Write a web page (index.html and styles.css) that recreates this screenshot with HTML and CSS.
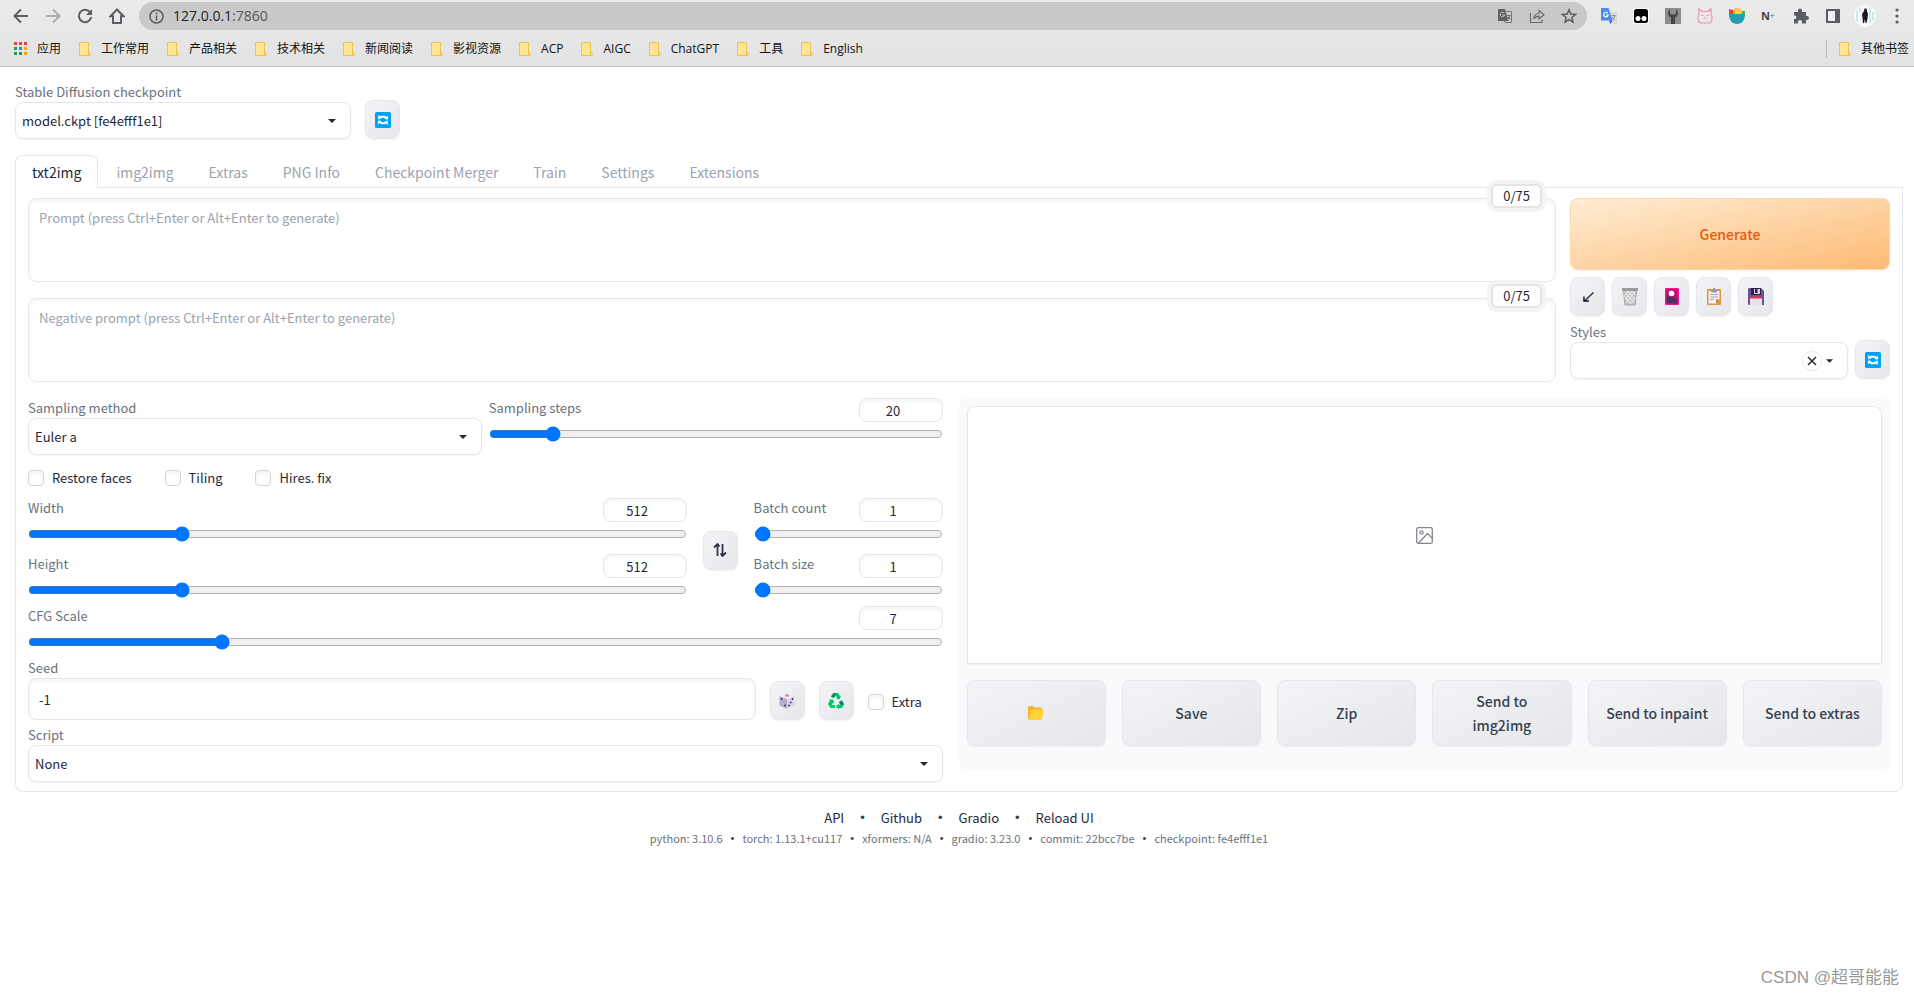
FILE: index.html
```html
<!DOCTYPE html>
<html lang="zh-CN">
<head>
<meta charset="utf-8">
<title>Stable Diffusion</title>
<link rel="stylesheet" href="styles.css">
</head>
<body>
<svg class="defs" width="0" height="0" aria-hidden="true">
  <symbol id="folder" viewBox="0 0 12 14"><path d="M.5.5h9v9.500h1.500v3.500H.5z" fill="#ffe694" stroke="#ecc548"/><path d="M9.500 9.500v3.500" stroke="#ecc548"/></symbol>
  <symbol id="caret" viewBox="0 0 8 4"><path d="M0 0h8L4 4z" fill="#1f2937"/></symbol>
  <symbol id="refresh" viewBox="0 0 16 16"><rect width="16" height="16" rx="1.500" fill="#00a2ed"/><path d="M5.500 4.800H9A2.600 2.600 0 0 1 11.700 7.500M10.500 11.200H7A2.600 2.600 0 0 1 4.300 8.500" fill="none" stroke="#fff" stroke-width="1.900"/><path d="M3.200 3v4.600L7 6zM12.800 13V8.400L9 10z" fill="#fff"/><path d="M9.500 7h3.600V3.600zM6.500 9H2.900v3.400z" fill="#fff"/></symbol>
</svg>

<header class="browser">
  <div class="toolbar">
    <button class="nav" aria-label="Back"><svg width="16" height="16" viewBox="0 0 16 16"><path d="M15 8H2M8 1.500 1.500 8 8 14.500" fill="none" stroke="#5a5d61" stroke-width="2"/></svg></button>
    <button class="nav" aria-label="Forward"><svg width="16" height="16" viewBox="0 0 16 16"><path d="M1 8h13M8 1.500 14.500 8 8 14.500" fill="none" stroke="#adadad" stroke-width="2"/></svg></button>
    <button class="nav" aria-label="Reload"><svg width="16" height="16" viewBox="0 0 16 16"><path d="M13 4.200A6.200 6.200 0 1 0 14.200 9" fill="none" stroke="#5a5d61" stroke-width="2"/><path d="M15 1v6H9z" fill="#5a5d61"/></svg></button>
    <button class="nav" aria-label="Home"><svg width="16" height="16" viewBox="0 0 16 16"><path d="M8 1.500 1.500 8.200H4V15h8V8.200h2.500z" fill="none" stroke="#5a5d61" stroke-width="2"/></svg></button>
    <div class="omnibox">
      <svg width="15" height="15" viewBox="0 0 15 15"><circle cx="7.500" cy="7.500" r="6.500" fill="none" stroke="#5a5d61" stroke-width="1.500"/><path d="M7.500 6.500v5M7.500 3.500v1.800" stroke="#5a5d61" stroke-width="1.600"/></svg>
      <span class="url">127.0.0.1<span class="port">:7860</span></span>
      <svg width="16" height="16" viewBox="0 0 16 16"><path d="M1 1h7l3.500 12H1z" fill="#5f6368"/><path d="M9 3.500h5.500v11H8l-1-2" fill="none" stroke="#77797c"/><path d="M7.300 5.300A2.200 2.200 0 1 0 7.600 7H5.500" fill="none" stroke="#c9c9c9"/><path d="M10.500 7.500h3M13 7.500c-.5 2-1.500 3-2.500 4M11 9l2.500 2.500" fill="none" stroke="#5f6368"/></svg>
      <svg width="16" height="16" viewBox="0 0 16 16"><path d="M1.500 5v9.500h11.500v-3M4.500 11C5 7.500 7 5.500 10 5.500V2.500L15 6.700 10 11V8.200C7.500 8.200 6 9 4.500 11z" fill="none" stroke="#686b6f" stroke-width="1.200"/></svg>
      <svg width="16" height="16" viewBox="0 0 16 16"><path d="m8 1.800 1.800 4.300 4.700.4-3.600 3 1.100 4.600L8 11.600l-4 2.500 1.100-4.600-3.600-3 4.700-.4z" fill="none" stroke="#5a5d61" stroke-width="1.500"/></svg>
    </div>
    <div class="extensions">
      <svg width="16" height="16" viewBox="0 0 16 16"><path d="M6 4h10v12H9z" fill="#d8dadd"/><path d="M0 0h7.500l4 12.500H0z" fill="#4d8af0"/><path d="m8 12.500 3.500 0L9.500 16z" fill="#2f61c5"/><path d="M6.800 5.200A2.300 2.300 0 1 0 7.200 7H5" fill="none" stroke="#fff" stroke-width="1.200"/><path d="M10.500 7.500h4M14 7.500c-.5 2-1.500 3.500-3 4.500M11 9l3 3" fill="none" stroke="#7f9297"/></svg>
      <svg width="16" height="16" viewBox="0 0 16 16"><rect width="16" height="16" rx="3" fill="#fff"/><rect x="1" y="1" width="14" height="14" rx="2.500" fill="#000"/><circle cx="5" cy="10.500" r="2.500" fill="#fff"/><circle cx="11" cy="10.500" r="2.500" fill="#fff"/></svg>
      <svg width="16" height="16" viewBox="0 0 16 16"><path d="M0 0h16v16H0z" fill="#8d8d8d"/><path d="M5 1.500C2 3.500 2.500 8 6 9.500V16h4V9.500C13.500 8 14 3.500 11 1.500V5.500L9.500 6.500h-3L5 5.500z" fill="#464646"/></svg>
      <svg width="16" height="16" viewBox="0 0 16 16"><path d="M2 1v5C0 9 1 13.500 3 15h10c2-1.500 3-6 1-9V1l-3.500 2.500h-5zM4 7.500h2.500M9.500 7.500H12M7 10h2" fill="none" stroke="#f48fb1" stroke-width="1.200"/></svg>
      <svg width="16" height="16" viewBox="0 0 16 16"><path d="M0 7V1l4 1 3 5z" fill="#d94a3a"/><path d="M4 7V2l3-2 3 1 1 6z" fill="#f9a93a"/><path d="M6 6V2l3-2 4 1v5z" fill="#ffd34d"/><path d="m12 7 1-4 3 0v3z" fill="#6aaa3d"/><path d="M0 6h16c0 6-3 10-8 10S0 12 0 6z" fill="#279bb3"/></svg>
      <span class="ext-n">N<small>+</small></span>
      <svg width="16" height="16" viewBox="0 0 16 16"><path d="M1 4h4V2.500a2 2 0 0 1 4 0V4h4v4h1a2 2 0 0 1 0 4h-1v3.500H9V14a1.800 1.800 0 0 0-4 0v1.500H1V11h1a1.800 1.800 0 0 0 0-3.500H1z" fill="#5a5d61"/></svg>
      <svg width="16" height="16" viewBox="0 0 16 16"><path d="M2 2h12v12H2z" fill="#f1f1f1" stroke="#5a5d61" stroke-width="2"/><path d="M10 1h5v14h-5z" fill="#5a5d61"/></svg>
      <svg class="avatar" width="22" height="22" viewBox="0 0 22 22"><circle cx="11" cy="11" r="11" fill="#f4f9fa"/><path d="M3 6v11M6 3v4M16 3v15M19 7v8" stroke="#c3e1e6" stroke-width="1.500"/><path d="M10.500 3.500h2L13 6l1 3-.5 4.500-1 4.500h-1l-.5-4-1 4H9l-.5-5L8 9l2-3z" fill="#151a20"/></svg>
      <svg width="16" height="16" viewBox="0 0 16 16"><path d="M8 2h.01M8 8h.01M8 14h.01" stroke="#5a5d61" stroke-width="3.200" stroke-linecap="round"/></svg>
    </div>
  </div>
  <nav class="bookmarks">
    <a class="apps" href="#"><svg width="13" height="13" viewBox="0 0 13 13"><path d="M0 0h3v3H0zM5 0h3v3H5zM10 0h3v3h-3z" fill="#ea4335"/><path d="M0 5h3v3H0zM0 10h3v3H0zM5 10h3v3H5z" fill="#1e9e56"/><path d="M5 5h3v3H5z" fill="#3285f4"/><path d="M10 5h3v3h-3zM10 10h3v3h-3z" fill="#fbaa05"/></svg>应用</a>
    <a href="#"><svg width="12" height="14"><use href="#folder"/></svg>工作常用</a>
    <a href="#"><svg width="12" height="14"><use href="#folder"/></svg>产品相关</a>
    <a href="#"><svg width="12" height="14"><use href="#folder"/></svg>技术相关</a>
    <a href="#"><svg width="12" height="14"><use href="#folder"/></svg>新闻阅读</a>
    <a href="#"><svg width="12" height="14"><use href="#folder"/></svg>影视资源</a>
    <a href="#"><svg width="12" height="14"><use href="#folder"/></svg>ACP</a>
    <a href="#"><svg width="12" height="14"><use href="#folder"/></svg>AIGC</a>
    <a href="#"><svg width="12" height="14"><use href="#folder"/></svg>ChatGPT</a>
    <a href="#"><svg width="12" height="14"><use href="#folder"/></svg>工具</a>
    <a href="#"><svg width="12" height="14"><use href="#folder"/></svg>English</a>
    <a class="other" href="#"><svg width="12" height="14"><use href="#folder"/></svg>其他书签</a>
  </nav>
</header>

<main class="app">
  <div class="checkpoint">
    <div class="field">
      <label for="ckpt">Stable Diffusion checkpoint</label>
      <div class="select"><select id="ckpt"><option>model.ckpt [fe4efff1e1]</option></select><svg class="caret" width="8" height="4"><use href="#caret"/></svg></div>
    </div>
    <button class="tool" aria-label="Refresh checkpoints"><svg width="16" height="16"><use href="#refresh"/></svg></button>
  </div>

  <div class="tabs" role="tablist">
    <button class="tab active" role="tab">txt2img</button>
    <button class="tab" role="tab">img2img</button>
    <button class="tab" role="tab">Extras</button>
    <button class="tab" role="tab">PNG Info</button>
    <button class="tab" role="tab">Checkpoint Merger</button>
    <button class="tab" role="tab">Train</button>
    <button class="tab" role="tab">Settings</button>
    <button class="tab" role="tab">Extensions</button>
  </div>

  <section class="panel">
    <div class="top">
      <div class="prompts">
        <div class="prompt"><textarea aria-label="Prompt" placeholder="Prompt (press Ctrl+Enter or Alt+Enter to generate)"></textarea><span class="counter">0/75</span></div>
        <div class="prompt"><textarea aria-label="Negative prompt" placeholder="Negative prompt (press Ctrl+Enter or Alt+Enter to generate)"></textarea><span class="counter">0/75</span></div>
      </div>
      <div class="actions">
        <button class="generate">Generate</button>
        <div class="tools">
          <button class="tool" aria-label="Read parameters"><svg width="16" height="16" viewBox="0 0 16 16"><path d="M13.500 3.500 5 11.500M4 7.500v4.500h5" fill="none" stroke="#1f2937" stroke-width="1.300"/><path d="M3.400 7.500 5 11l4 1.600H3.400z" fill="#1f2937"/></svg></button>
          <button class="tool" aria-label="Clear prompt"><svg width="16" height="18" viewBox="0 0 16 18"><path d="M1.500 2.500h13L13 17H3z" fill="#c4c4c4" stroke="#a3a3a3"/><path d="m3 4 9 11M6 3l7 9M10 3l3 4M2.500 8l6 8M13 4 4 15M10 3 3 12M6 3 2.500 8M13.500 9 8 16" stroke="#eee"/><path d="M0 0h16v3H0z" fill="#9b9b9b"/></svg></button>
          <button class="tool" aria-label="Extra networks"><svg width="14" height="17" viewBox="0 0 14 17"><rect width="14" height="17" rx="1" fill="#f0148c"/><path d="M1.500 1.500h11v14h-11z" fill="#c50a73"/><path d="M1.500 9q4-3 7 1l4 1v4.500h-11z" fill="#542e63"/><circle cx="6.500" cy="5.500" r="2.800" fill="#fff"/></svg></button>
          <button class="tool" aria-label="Apply styles"><svg width="14" height="17" viewBox="0 0 14 17"><rect y="1" width="14" height="16" rx="1" fill="#df9542"/><path d="M1.500 3h11v8.500L9 15.500H1.500z" fill="#f4efff"/><path d="M9 15.500v-4h3.500z" fill="#c97b2b"/><path d="M3 6.500h8M3 9h8M3 11.500h4" stroke="#aaa5b5"/><path d="M4 1.500h2V0h2v1.500h2v3H4z" fill="#9c9aa4"/></svg></button>
          <button class="tool" aria-label="Save style"><svg width="16" height="17" viewBox="0 0 16 17"><path d="M1 0h12l3 3v14H1L0 16V1z" fill="#67519a"/><path d="M3 0h10v7H3z" fill="#31204d"/><path d="M6 1h6v5H6z" fill="#d8d8d8"/><path d="M7 1h2.500v4H7z" fill="#31204d"/><path d="M2 9h12v8H2z" fill="#e5e3ea"/><path d="M2 8.500h12v2H2z" fill="#f22f46"/></svg></button>
        </div>
        <div class="styles-row">
          <div class="field">
            <label for="styles">Styles</label>
            <div class="select"><select id="styles"><option></option></select><button class="clear" aria-label="Clear styles"><svg width="10" height="10" viewBox="0 0 10 10"><path d="m1 1 8 8M9 1 1 9" stroke="#1f2937" stroke-width="1.500"/></svg></button><svg class="caret" width="7" height="4"><use href="#caret"/></svg></div>
          </div>
          <button class="tool" aria-label="Refresh styles"><svg width="16" height="16"><use href="#refresh"/></svg></button>
        </div>
      </div>
    </div>

    <div class="columns">
      <div class="settings">
        <div class="sampling">
          <div class="field">
            <label for="sampler">Sampling method</label>
            <div class="select"><select id="sampler"><option>Euler a</option></select><svg class="caret" width="8" height="4"><use href="#caret"/></svg></div>
          </div>
          <div class="slider"><label for="steps">Sampling steps</label><input type="number" id="steps" value="20"><input type="range" aria-label="Sampling steps" min="1" max="150" value="20"></div>
        </div>
        <div class="checks">
          <label><input type="checkbox">Restore faces</label>
          <label><input type="checkbox">Tiling</label>
          <label><input type="checkbox">Hires. fix</label>
        </div>
        <div class="dims">
          <div class="stack">
            <div class="slider"><label for="w">Width</label><input type="number" id="w" value="512"><input type="range" aria-label="Width" min="64" max="2048" value="512"></div>
            <div class="slider"><label for="h">Height</label><input type="number" id="h" value="512"><input type="range" aria-label="Height" min="64" max="2048" value="512"></div>
          </div>
          <button class="tool swap" aria-label="Swap width and height"><svg width="14" height="14" viewBox="0 0 14 14"><path d="M4.500 13V2M1 4.500 4.500 1 6.500 3.500M9.500 1v11M7.500 10.500l2 2.500L13 9.500" fill="none" stroke="#2b3546" stroke-width="1.800"/></svg></button>
          <div class="stack">
            <div class="slider"><label for="bc">Batch count</label><input type="number" id="bc" value="1"><input type="range" aria-label="Batch count" min="1" max="100" value="1"></div>
            <div class="slider"><label for="bs">Batch size</label><input type="number" id="bs" value="1"><input type="range" aria-label="Batch size" min="1" max="8" value="1"></div>
          </div>
        </div>
        <div class="slider cfg"><label for="cfg">CFG Scale</label><input type="number" id="cfg" value="7"><input type="range" aria-label="CFG Scale" min="1" max="30" value="7"></div>
        <div class="seed-row">
          <div class="field"><label for="seed">Seed</label><input class="seed" type="text" id="seed" value="-1"></div>
          <button class="tool" aria-label="Random seed"><svg width="16" height="16" viewBox="0 0 16 16"><path d="m8 0 7.500 3L8 6 .5 3z" fill="#f2eef8"/><path d="M.5 3 8 6v10L.5 12.500z" fill="#b4acc8"/><path d="M15.500 3 8 6v10l7.500-3.500z" fill="#ddd3ed"/><ellipse cx="8" cy="2.500" rx="2.200" ry="1.200" fill="#f47b86"/><path d="M2.500 6h.01M6 12.500h.01M10 12.500h.01M11.700 9.500h.01M13.500 6h.01" stroke="#42305e" stroke-width="1.800" stroke-linecap="round"/></svg></button>
          <button class="tool" aria-label="Reuse seed"><svg width="16" height="16" viewBox="0 0 16 16"><path d="m5 1 1-1h4l2 3 1-.5-1.500 4L8 5.500 9 5 7.500 2.500 6 5 3 3.500z" fill="#00c66a"/><path d="M5 1 6 0h2L5.500 5 3 3.500z" fill="#008463"/><path d="M1 6.500h4L6.500 10l-1.500-.5L4 12h3v3H3L0 11l2-3.500z" fill="#00c66a"/><path d="m0 11 4 1h3v3H3z" fill="#00d26a"/><path d="m8 13.500 3-3V12h1.500L11 9l3-1.500 2 4-2 3.500h-3v1.500z" fill="#00c66a"/><path d="m11 9 3-1.500 2 4-3.500.5z" fill="#008463"/></svg></button>
          <label class="check"><input type="checkbox">Extra</label>
        </div>
        <div class="field script">
          <label for="script">Script</label>
          <div class="select"><select id="script"><option>None</option></select><svg class="caret" width="8" height="4"><use href="#caret"/></svg></div>
        </div>
      </div>

      <div class="results">
        <div class="gallery"><svg width="17" height="17" viewBox="0 0 17 17" fill="none" stroke="#82868f" stroke-width="1.300"><rect x=".7" y=".7" width="15.600" height="15.600" rx="1.500"/><circle cx="5.500" cy="5.500" r="1.600"/><path d="M2.500 16 11.500 6.500l5 5"/></svg></div>
        <div class="outputs">
          <button aria-label="Open folder"><svg width="16" height="14" viewBox="0 0 16 14"><path d="M0 1q0-1 1-1h4l1.500 1.500H13q1 0 1 1V6L1 13.500q-1 0-1-1z" fill="#fdb12c"/><path d="M3.500 3.500H15q1 0 .8 1L14 13q-.2 1-1 1H1z" fill="#ffd33b"/></svg></button>
          <button>Save</button>
          <button>Zip</button>
          <button>Send to img2img</button>
          <button>Send to inpaint</button>
          <button>Send to extras</button>
        </div>
      </div>
    </div>
  </section>

  <footer class="footer">
    <div class="links"><a href="#">API</a><span class="dot">•</span><a href="#">Github</a><span class="dot">•</span><a href="#">Gradio</a><span class="dot">•</span><a href="#">Reload UI</a></div>
    <div class="versions"><span>python: 3.10.6</span><span class="dot">•</span><span>torch: 1.13.1+cu117</span><span class="dot">•</span><span>xformers: N/A</span><span class="dot">•</span><span>gradio: 3.23.0</span><span class="dot">•</span><span>commit: 22bcc7be</span><span class="dot">•</span><span>checkpoint: fe4efff1e1</span></div>
  </footer>
</main>
<div class="watermark">CSDN @超哥能能</div>
</body>
</html>
```

FILE: styles.css
```css
* { box-sizing: border-box; }

:root {
  --ui: "Noto Sans CJK SC", "Open Sans", sans-serif;
  --line: #e5e7eb;
  --text: #1f2937;
  --muted: #6b7280;
}

body {
  margin: 0;
  min-height: 100vh;
  position: relative;
  background: #fff;
  color: var(--text);
  font-family: var(--ui);
  font-size: 13px;
  line-height: 20px;
}

button, input, select, textarea { font: inherit; color: inherit; margin: 0; }
button { padding: 0; }
a { color: inherit; text-decoration: none; }
svg { display: block; flex: none; }
.defs { position: absolute; }

/* Browser chrome */
.browser {
  background: linear-gradient(#ebebeb, #e3e3e3);
  border-bottom: 1px solid #c3c3c3;
  padding-top: 2px;
}
.toolbar { display: flex; align-items: center; padding: 0 9px 0 13px; }
.nav { width: 16px; height: 16px; margin-right: 16px; border: 0; background: none; }
.nav:nth-of-type(4) { margin-right: 14px; }
.omnibox {
  flex: 1;
  height: 28px;
  display: flex;
  align-items: center;
  gap: 16px;
  padding: 0 10px;
  border-radius: 14px;
  background: #c9c9c9;
}
.url { flex: 1; margin-left: -7px; font: 14px/20px "Open Sans", sans-serif; color: #202124; }
.port { color: #55575a; }
.extensions { display: flex; align-items: center; gap: 16px; margin-left: 14px; }
.avatar { margin: 0 -3px; }
.ext-n { width: 16px; font: bold 11px/16px "Open Sans", sans-serif; color: #444; white-space: nowrap; }
.ext-n small { font-size: 8px; color: #999; vertical-align: 1px; }
.bookmarks {
  display: flex;
  align-items: center;
  gap: 18px;
  height: 36px;
  padding: 1px 5px 0 14px;
  font: 12px/18px "Open Sans", "Noto Sans CJK SC", sans-serif;
  color: #111;
}
.bookmarks a { display: flex; align-items: center; gap: 10px; white-space: nowrap; }
.bookmarks .other { margin-left: auto; padding-left: 12px; border-left: 1px solid #bdbdbd; }

/* Form parts */
.app { padding: 15px 11px 0 15px; }
.field { display: flex; flex-direction: column; min-width: 0; }
.field label, .slider label { color: var(--muted); line-height: 20px; }
.select { position: relative; display: flex; align-items: center; }
.select select {
  width: 100%;
  height: 37px;
  padding: 0 30px 0 6px;
  appearance: none;
  border: 1px solid var(--line);
  border-radius: 8px;
  background: #fff;
  box-shadow: 0 1px 2px rgba(0, 0, 0, .05);
}
.caret { position: absolute; right: 15px; pointer-events: none; }
.clear {
  position: absolute;
  right: 26px;
  width: 20px;
  height: 20px;
  display: grid;
  place-items: center;
  border: 1px solid var(--line);
  border-radius: 50%;
  background: #fff;
}
.tool {
  flex: none;
  width: 35px;
  height: 39px;
  display: grid;
  place-items: center;
  border: 1px solid var(--line);
  border-radius: 8px;
  background: linear-gradient(to bottom right, #f3f4f6, #e5e7eb);
  box-shadow: 0 1px 2px rgba(0, 0, 0, .05);
}
input[type="number"], .seed {
  border: 1px solid var(--line);
  border-radius: 8px;
  background: #fff;
  box-shadow: inset 0 2px 4px rgba(0, 0, 0, .05);
}
input[type="number"] { width: 84px; height: 24px; padding: 0 8px; text-align: center; }
input[type="checkbox"] {
  appearance: none;
  width: 16px;
  height: 16px;
  border: 1px solid #d1d5db;
  border-radius: 4px;
  background: #fff;
  box-shadow: inset 0 2px 4px rgba(0, 0, 0, .05);
}
.slider { display: flex; flex-wrap: wrap; justify-content: space-between; row-gap: 4px; min-width: 0; align-content: flex-start; }
.slider input[type="range"] { flex: 0 0 100%; width: 100%; height: 16px; padding: 0 1px; }

.checkpoint { display: flex; align-items: flex-end; gap: 14px; }
.checkpoint .field { width: 336px; }

/* Tabs */
.tabs { display: flex; gap: 1px; margin-top: 16px; }
.tab {
  height: 33px;
  margin-bottom: -1px;
  padding: 0 16px;
  border: 1px solid transparent;
  border-bottom: 0;
  border-radius: 8px 8px 0 0;
  background: none;
  color: #9ca3af;
  font-size: 14px;
}
.tab.active { border-color: var(--line); background: #fff; color: var(--text); position: relative; }
.panel { border: 1px solid var(--line); border-radius: 0 0 8px 8px; padding: 10px 12px 9px; }

/* Prompt area */
.top { display: grid; grid-template-columns: 1528fr 320fr; gap: 14px; }
.prompts { display: flex; flex-direction: column; gap: 16px; }
.prompt { position: relative; display: flex; }
.prompt textarea {
  width: 100%;
  height: 84px;
  padding: 9px 10px;
  resize: none;
  border: 1px solid var(--line);
  border-radius: 8px;
  box-shadow: inset 0 2px 4px rgba(0, 0, 0, .05);
}
textarea::placeholder { color: #9ca3af; }
.counter {
  position: absolute;
  top: -14px;
  right: 14px;
  padding: 0 10px;
  line-height: 20px;
  border: 2px solid #e4e4e4;
  border-radius: 6px;
  background: #fff;
  box-shadow: 0 0 0 4px #f4f4f4;
}
.generate {
  width: 100%;
  height: 72px;
  border: 1px solid #fed7aa;
  border-radius: 8px;
  background: linear-gradient(to bottom right, #ffedd5, #fdba74);
  box-shadow: 0 1px 2px rgba(0, 0, 0, .05);
  color: #ea580c;
  font-size: 14px;
  font-weight: 500;
}
.tools { display: flex; gap: 7px; margin: 7px 0 6px; }
.styles-row { display: flex; align-items: flex-end; gap: 7px; }
.styles-row .field { flex: 1; }

/* Settings and results */
.columns { display: grid; grid-template-columns: 915fr 932fr; gap: 16px; margin-top: 16px; align-items: start; }
.sampling { display: grid; grid-template-columns: 454fr 454fr; gap: 7px; }
.checks { display: flex; gap: 33px; margin: 15px 0 12px; }
.checks label, .check { display: flex; align-items: center; gap: 8px; line-height: 16px; }
.dims { display: grid; grid-template-columns: 659fr 35px 189fr; gap: 16px; align-items: center; }
.swap { margin-top: 4px; }
.stack { display: flex; flex-direction: column; gap: 12px; min-width: 0; }
.cfg { margin: 8px 0; }
.seed-row { display: flex; align-items: flex-end; gap: 14px; }
.seed-row .field { flex: 1; }
.seed { width: 100%; height: 42px; padding: 0 10px; }
.check { width: 75px; padding-bottom: 10px; }
.script { margin-top: 5px; }

.results { padding: 8px 8px 24px; border-radius: 8px; background: #f9fafb; }
.gallery {
  height: 258px;
  display: grid;
  place-items: center;
  border: 1px solid var(--line);
  border-radius: 8px 8px 0 0;
  background: #fff;
  box-shadow: 0 1px 2px rgba(0, 0, 0, .05);
}
.outputs { display: grid; grid-template-columns: repeat(6, 1fr); gap: 16px; margin-top: 16px; }
.outputs button {
  height: 66px;
  padding: 0 16px;
  display: grid;
  place-items: center;
  border: 1px solid var(--line);
  border-radius: 8px;
  background: linear-gradient(to bottom right, #f3f4f6, #e5e7eb);
  box-shadow: 0 1px 2px rgba(0, 0, 0, .05);
  color: #374151;
  font-size: 14px;
  font-weight: 500;
  line-height: 24px;
}

.footer { margin-top: 16px; }
.links, .versions { display: flex; justify-content: center; }
.links { gap: 16px; }
.versions { gap: 8px; font-size: 11px; color: var(--muted); }
.dot { font-family: "Liberation Sans", sans-serif; color: #374151; }
.watermark {
  position: absolute;
  right: 15px;
  bottom: 5px;
  font: 17px/26px "Liberation Sans", "Noto Sans CJK SC", sans-serif;
  color: #999;
}
```
